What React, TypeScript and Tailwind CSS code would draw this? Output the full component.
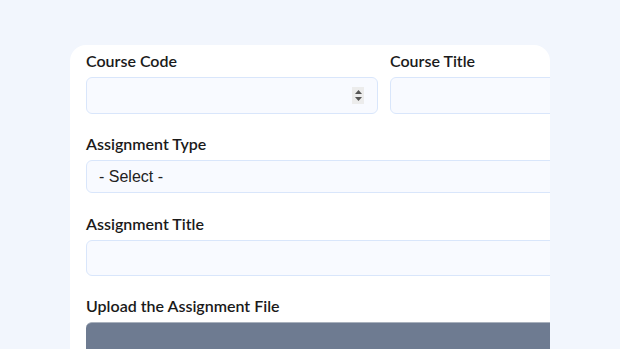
export default function App() {
  const labelCls = 'block text-[16px] leading-5 font-semibold text-[#1a1a1a]';
  const inputCls = 'w-full rounded-md border border-[#d9e6fb] bg-[#f8faff] outline-none';

  return (
    <div className="w-[620px] h-[349px] overflow-hidden bg-[#f2f6fd] pl-[70px] pt-[45px] pr-[70px]" style={{ fontFamily: 'Lato, "Noto Sans", sans-serif' }}>
      <div className="h-[320px] w-[480px] overflow-hidden rounded-t-2xl bg-white">
        <div className="w-[612px] pl-4 pt-[6px]">
          <div className="grid grid-cols-2 gap-x-3">
            <div>
              <label className={labelCls}>Course Code</label>
              <div className={`${inputCls} mt-[6px] h-[37px] flex items-center justify-end pr-[13px]`}>
                <div className="flex h-[17px] w-[12px] flex-col items-center justify-center gap-[3px] bg-[#ececec]">
                  <svg width="7" height="4" viewBox="0 0 7 4"><path d="M3.5 0L7 4H0z" fill="#555" /></svg>
                  <svg width="7" height="4" viewBox="0 0 7 4"><path d="M0 0h7L3.5 4z" fill="#555" /></svg>
                </div>
              </div>
            </div>
            <div>
              <label className={labelCls}>Course Title</label>
              <div className={`${inputCls} mt-[6px] h-[37px]`} />
            </div>
          </div>

          <label className={`${labelCls} mt-5`}>Assignment Type</label>
          <div className={`${inputCls} mt-[6px] flex h-[33px] items-center px-3 text-[16px] text-[#222]`} style={{ fontFamily: '"Liberation Sans", Arial, sans-serif' }}>
            - Select -
          </div>

          <label className={`${labelCls} mt-[21px]`}>Assignment Title</label>
          <div className={`${inputCls} mt-[6px] h-[36px]`} />

          <label className={`${labelCls} mt-5`}>Upload the Assignment File</label>
          <div className="mt-[6px] h-[40px] rounded-t-md border-t border-[#a9b1bd] bg-[#6e7b91]" />
        </div>
      </div>
    </div>
  );
}
